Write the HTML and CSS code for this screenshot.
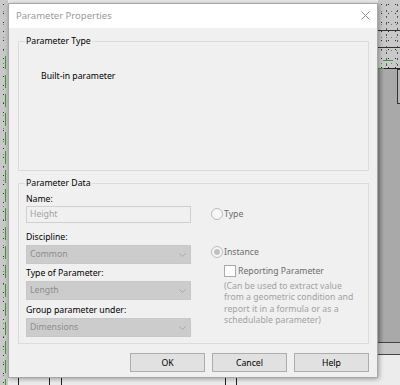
FILE: index.html
```html
<!DOCTYPE html>
<html lang="en">
<head>
    <meta charset="UTF-8">
    <title>Parameter Properties</title>
    <link rel="stylesheet" href="styles.css">
</head>
<body>
<div class="desk">
    <!-- drawing behind the dialog -->
    <div class="hatch hatch-left"></div>
    <div class="dash-left"></div>
    <div class="hatch hatch-right"></div>
    <div class="line line-r1"></div>
    <div class="line line-r2"></div>
    <div class="green-dash"></div>
    <div class="line line-r3"></div>
    <div class="panel-right"></div>
    <div class="tag-right"></div>
    <div class="band-right"></div>
    <div class="vline v1"></div>
    <div class="vline v2"></div>
    <div class="vline v3"></div>
    <div class="vline v4"></div>
    <div class="vline v5"></div>

    <div class="dialog">
        <div class="titlebar">
            <span class="title">Parameter Properties</span>
            <svg class="close" width="9" height="9" viewBox="0 0 9 9">
                <path d="M0.5 0.5 L8.5 8.5 M8.5 0.5 L0.5 8.5" stroke="#8a8a8a" stroke-width="1" fill="none"/>
            </svg>
        </div>

        <div class="dialog-body">
            <section class="group group-type">
                <span class="legend">Parameter Type</span>
                <p class="type-text">Built-in parameter</p>
            </section>

            <section class="group group-data">
                <span class="legend">Parameter Data</span>
                <div class="data-cols">
                    <div class="fields">
                        <div class="field-label">Name:</div>
                        <div class="textbox">Height</div>

                        <div class="field-label lbl-discipline">Discipline:</div>
                        <div class="combo">Common<svg class="chev" width="7" height="4" viewBox="0 0 7 4"><path d="M0.5 0.5 L3.5 3.5 L6.5 0.5" stroke="#a9a9a9" fill="none"/></svg></div>

                        <div class="field-label lbl-type">Type of Parameter:</div>
                        <div class="combo">Length<svg class="chev" width="7" height="4" viewBox="0 0 7 4"><path d="M0.5 0.5 L3.5 3.5 L6.5 0.5" stroke="#a9a9a9" fill="none"/></svg></div>

                        <div class="field-label lbl-group">Group parameter under:</div>
                        <div class="combo">Dimensions<svg class="chev" width="7" height="4" viewBox="0 0 7 4"><path d="M0.5 0.5 L3.5 3.5 L6.5 0.5" stroke="#a9a9a9" fill="none"/></svg></div>
                    </div>

                    <div class="options">
                        <div class="radio-row">
                            <span class="radio"></span>
                            <span class="opt-text">Type</span>
                        </div>
                        <div class="radio-row row-instance">
                            <span class="radio checked"></span>
                            <span class="opt-text">Instance</span>
                        </div>
                        <div class="check-row">
                            <span class="checkbox"></span>
                            <span class="opt-text">Reporting Parameter</span>
                        </div>
                        <p class="note">(Can be used to extract value<br>from a geometric condition and<br>report it in a formula or as a<br>schedulable parameter)</p>
                    </div>
                </div>
            </section>

            <div class="buttons">
                <button>OK</button>
                <button>Cancel</button>
                <button>Help</button>
            </div>
        </div>
    </div>
</div>
</body>
</html>
```

FILE: styles.css
```css
body {
    margin: 0;
    font-family: "Noto Sans", "Open Sans", sans-serif;
    font-size: 8.7px;
    line-height: 12px;
    color: #000;
}

.desk {
    position: relative;
    width: 400px;
    height: 385px;
    overflow: hidden;
    background: #ececec;
}

/* background drawing */
.hatch {
    position: absolute;
    background-color: #c9c9c9;
    background-image:
        radial-gradient(circle, #2e2e2e 0.6px, transparent 1px),
        radial-gradient(circle, #555 0.6px, transparent 1px),
        radial-gradient(circle, #777 0.5px, transparent 1px);
    background-size: 7px 9px, 11px 6px, 5px 13px;
    background-position: 0 0, 3px 2px, 1px 5px;
}

.hatch-left {
    left: 0;
    top: 0;
    width: 8px;
    height: 385px;
}

.dash-left {
    position: absolute;
    left: 5px;
    top: 56px;
    width: 1px;
    height: 329px;
    background: repeating-linear-gradient(#3d9a32 0 13px, transparent 13px 19px);
}

.hatch-right {
    left: 378px;
    top: 0;
    width: 22px;
    height: 68px;
}

.line {
    position: absolute;
    left: 378px;
    width: 22px;
    height: 1px;
    background: #333;
}

.line-r1 { top: 30px; }
.line-r2 { top: 47px; }
.line-r3 { top: 68px; background: linear-gradient(90deg, #3d9a32 0 6px, #222 6px); }

.green-dash {
    position: absolute;
    left: 383px;
    top: 60px;
    width: 10px;
    height: 1px;
    background: #3d9a32;
}

.panel-right {
    position: absolute;
    left: 378px;
    top: 69px;
    width: 22px;
    height: 273px;
    background: linear-gradient(90deg, #8f8f8f, #a9a9a9 6px);
}

.tag-right {
    position: absolute;
    left: 397px;
    top: 69px;
    width: 10px;
    height: 33px;
    border: 1px solid #333;
    background: #b5b5b5;
}

.band-right {
    position: absolute;
    left: 378px;
    top: 342px;
    width: 22px;
    height: 11px;
    border-top: 1px solid #444;
    border-bottom: 1px solid #444;
    background: #c4c4c4;
}

.vline {
    position: absolute;
    top: 378px;
    width: 1px;
    height: 7px;
    background: #222;
}

.v1 { left: 18px; }
.v2 { left: 49px; }
.v3 { left: 61px; }
.v4 { left: 225px; }
.v5 { left: 236px; }

/* dialog window */
.dialog {
    position: absolute;
    left: 8px;
    top: 3px;
    width: 370px;
    height: 375px;
    box-sizing: border-box;
    border: 1px solid #a7a7a7;
    background: #f0f0f0;
    box-shadow: 1px 1px 5px rgba(0, 0, 0, 0.35);
    display: flex;
    flex-direction: column;
}

.titlebar {
    height: 24px;
    flex-shrink: 0;
    background: #fff;
    display: flex;
    align-items: center;
    justify-content: space-between;
    padding: 0 7px 0 7px;
}

.title {
    color: #999;
    font-size: 9.5px;
}

.close {
    display: block;
    margin-top: -1px;
}

.dialog-body {
    flex: 1;
    padding: 13px 8px 0 9px;
}

.group {
    position: relative;
    box-sizing: border-box;
    border: 1px solid #dcdcdc;
}

.legend {
    position: absolute;
    top: -7px;
    left: 6px;
    padding: 0 1px;
    background: #f0f0f0;
}

.group-type {
    height: 130px;
    padding: 28px 0 0 22px;
}

.type-text {
    margin: 0;
}

.group-data {
    height: 161px;
    margin-top: 12px;
}

.data-cols {
    display: flex;
}

.fields {
    width: 165px;
    padding: 9px 0 0 7px;
}

.field-label {
    margin-bottom: 2px;
}

.lbl-discipline { margin-top: 8px; }
.lbl-type { margin-top: 3px; }
.lbl-group { margin-top: 4px; }

.textbox {
    height: 17px;
    box-sizing: border-box;
    border: 1px solid #d0d0d0;
    background: #f0f0f0;
    color: #a3a3a3;
    padding-left: 3px;
    line-height: 15px;
    margin-top: -1px;
}

.combo {
    position: relative;
    height: 19px;
    box-sizing: border-box;
    border: 1px solid #c8c8c8;
    background: #cccccc;
    color: #8c8c8c;
    padding-left: 3px;
    line-height: 17px;
    display: flex;
    justify-content: space-between;
    align-items: center;
    padding-right: 4px;
}

.options {
    margin-left: 20px;
    padding-top: 24px;
    color: #6d6d6d;
}

.radio-row,
.check-row {
    display: flex;
    align-items: center;
    height: 12px;
    gap: 1px;
}

.row-instance {
    margin-top: 26px;
}

.radio {
    width: 12px;
    height: 12px;
    box-sizing: border-box;
    border: 1px solid #bcbcbc;
    border-radius: 50%;
    background: #f6f6f6;
    display: flex;
    align-items: center;
    justify-content: center;
}

.radio.checked::after {
    content: "";
    width: 6px;
    height: 6px;
    border-radius: 50%;
    background: #c2c2c2;
}

.check-row {
    margin: 7px 0 0 13px;
    gap: 2px;
}

.checkbox {
    width: 12px;
    height: 12px;
    box-sizing: border-box;
    border: 1px solid #a9a9a9;
    background: #fff;
}

.note {
    margin: 4px 0 0 13px;
    line-height: 11.4px;
    color: #a2a2a2;
    white-space: nowrap;
}

.buttons {
    display: flex;
    justify-content: flex-end;
    gap: 7px;
    margin-top: 9px;
}

button {
    width: 75px;
    height: 19px;
    padding: 0;
    border: 1px solid #adadad;
    background: #e1e1e1;
    font-family: inherit;
    font-size: 8.7px;
    color: #000;
}
```
